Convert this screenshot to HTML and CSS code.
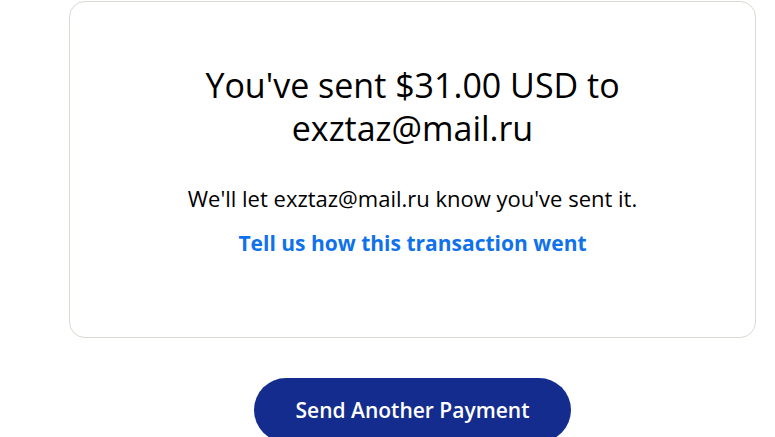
FILE: index.html
```html
<!DOCTYPE html>
<html lang="en">
<head>
<meta charset="utf-8">
<title>Payment sent</title>
<link rel="stylesheet" href="styles.css">
</head>
<body>
<main class="page">
  <section class="card">
    <h1 class="title">You've sent $31.00 USD to<br>exztaz@mail.ru</h1>
    <p class="note">We'll let exztaz@mail.ru know you've sent it.</p>
    <a class="feedback" href="#">Tell us how this transaction went</a>
  </section>
  <div class="actions">
    <button class="primary" type="button">Send Another Payment</button>
  </div>
</main>
</body>
</html>
```
FILE: styles.css
```css
html, body {
  margin: 0;
  padding: 0;
  background: #ffffff;
}
body {
  font-family: "Open Sans", "Noto Sans", "Liberation Sans", sans-serif;
  color: #000000;
}
.page {
  width: 687px;
  margin-left: 69px;
  padding-top: 1px;
  display: flex;
  flex-direction: column;
  align-items: center;
}
.card {
  box-sizing: border-box;
  width: 100%;
  height: 337px;
  border: 1px solid #dcd9d1;
  border-radius: 16px;
  display: flex;
  flex-direction: column;
  align-items: center;
  padding-top: 62px;
}
.title {
  margin: 0;
  font-size: 34px;
  font-weight: 400;
  line-height: 43px;
  text-align: center;
}
.note {
  margin: 34px 0 0;
  font-size: 22px;
  line-height: 28px;
}
.feedback {
  margin-top: 17px;
  font-size: 21px;
  font-weight: 700;
  line-height: 28px;
  color: #1072eb;
  text-decoration: none;
}
.actions {
  margin-top: 40px;
}
.primary {
  width: 317px;
  height: 64px;
  border: none;
  border-radius: 32px;
  background: #142c8e;
  color: #ffffff;
  font-family: inherit;
  font-size: 21px;
  font-weight: 600;
  cursor: pointer;
}
```
